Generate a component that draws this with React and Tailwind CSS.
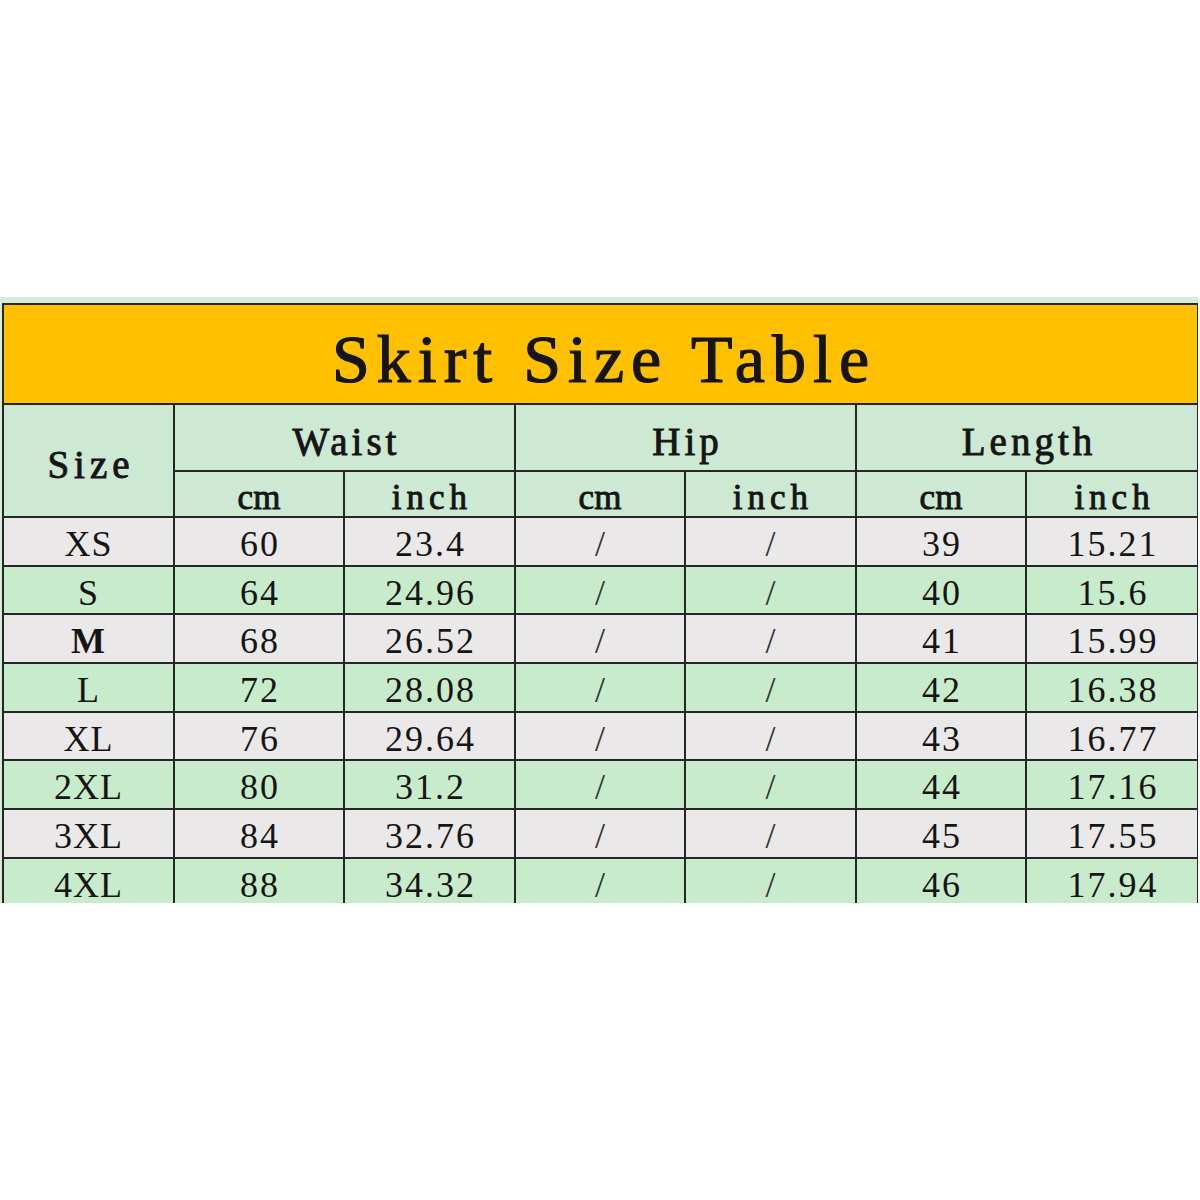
import React from "react";

const rows = [
  ["XS", "60", "23.4", "/", "/", "39", "15.21"],
  ["S", "64", "24.96", "/", "/", "40", "15.6"],
  ["M", "68", "26.52", "/", "/", "41", "15.99"],
  ["L", "72", "28.08", "/", "/", "42", "16.38"],
  ["XL", "76", "29.64", "/", "/", "43", "16.77"],
  ["2XL", "80", "31.2", "/", "/", "44", "17.16"],
  ["3XL", "84", "32.76", "/", "/", "45", "17.55"],
  ["4XL", "88", "34.32", "/", "/", "46", "17.94"],
];

const bd = "border-2 border-[#262626]";

export default function App() {
  return (
    <div className="w-[1200px] h-[1200px] bg-white pt-[297px]">
      <div className="w-[1198px] h-[606px] overflow-hidden bg-[#d4ecd8] pt-[6px] pl-[2px]">
        <table
          className="table-fixed border-collapse w-[1195px] text-[#151515]"
          style={{ fontFamily: '"Liberation Serif", "Times New Roman", serif' }}
        >
          <colgroup>
            <col className="w-[171px]" />
            <col className="w-[170px]" />
            <col className="w-[171px]" />
            <col className="w-[170px]" />
            <col className="w-[171px]" />
            <col className="w-[170px]" />
            <col className="w-[172px]" />
          </colgroup>
          <tbody>
            <tr className="h-[100px]">
              <td
                colSpan={7}
                className={`${bd} bg-[#ffc000] text-center align-middle pt-[10px] pl-[7px] text-[68px] font-normal [-webkit-text-stroke:1.2px_#151515] tracking-[7px] leading-none`}
              >
                Skirt Size Table
              </td>
            </tr>
            <tr className="h-[67px]">
              <td
                rowSpan={2}
                className={`${bd} bg-[#cde9d4] text-center align-middle pt-[8px] pl-[5px] text-[39px] font-normal [-webkit-text-stroke:0.9px_#151515] tracking-[5px] leading-none`}
              >
                Size
              </td>
              {["Waist", "Hip", "Length"].map((h) => (
                <td
                  key={h}
                  colSpan={2}
                  className={`${bd} bg-[#cde9d4] text-center align-middle pt-[8px] pl-[4px] text-[39px] font-normal [-webkit-text-stroke:0.9px_#151515] tracking-[4px] leading-none`}
                >
                  {h}
                </td>
              ))}
            </tr>
            <tr className="h-[46px]">
              {["cm", "inch", "cm", "inch", "cm", "inch"].map((h, i) => (
                <td
                  key={i}
                  className={`${bd} bg-[#cde9d4] text-center align-middle pt-[6px] text-[35px] font-normal [-webkit-text-stroke:0.9px_#151515] leading-none ${
                    h === "inch" ? "tracking-[5px] pl-[5px]" : "tracking-[0px]"
                  }`}
                >
                  {h}
                </td>
              ))}
            </tr>
            {rows.map((r, ri) => (
              <tr
                key={r[0]}
                className={`h-[48.7px] ${ri % 2 === 0 ? "bg-[#ebe8ea]" : "bg-[#c8ebcb]"}`}
              >
                {r.map((c, ci) => (
                  <td
                    key={ci}
                    className={`${bd} text-center align-middle pt-[5px] text-[36px] leading-none ${
                      ci === 0 ? "tracking-[1px]" : "tracking-[2px] pl-[2px]"
                    } ${ci === 0 && c === "M" ? "font-bold" : "font-normal"} ${
                      c === "/" ? "text-[32px] text-[#333]" : ""
                    }`}
                  >
                    {c}
                  </td>
                ))}
              </tr>
            ))}
          </tbody>
        </table>
      </div>
    </div>
  );
}
